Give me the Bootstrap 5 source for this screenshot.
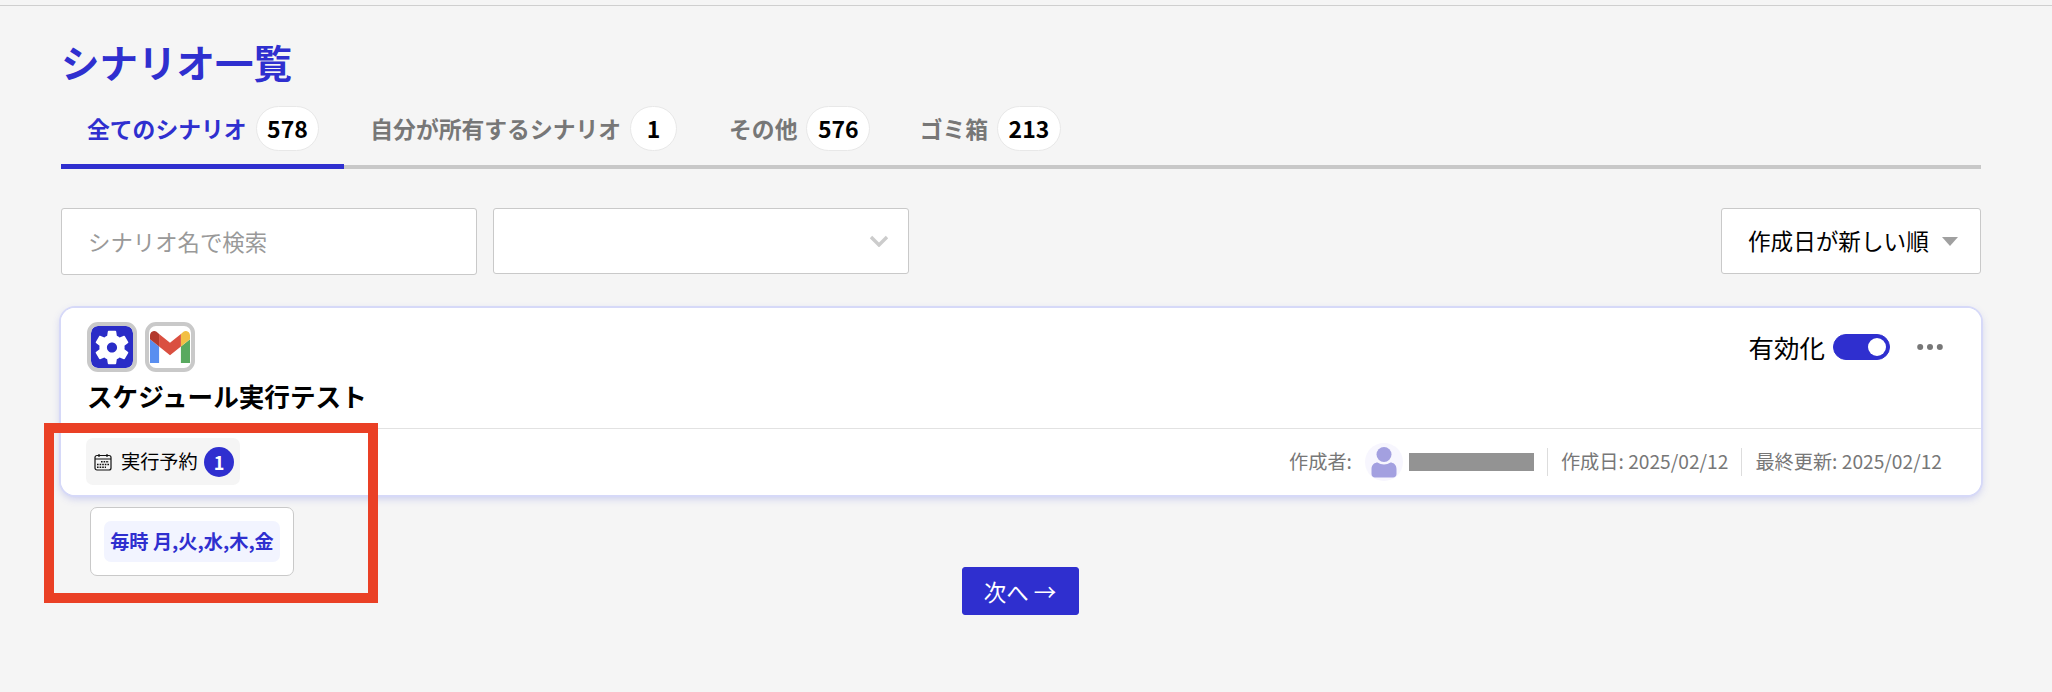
<!DOCTYPE html>
<html lang="ja">
<head>
<meta charset="utf-8">
<title>シナリオ一覧</title>
<link href="https://cdn.jsdelivr.net/npm/bootstrap@5.3.0/dist/css/bootstrap.min.css" rel="stylesheet">
<style>
html,body{height:100%}
body{background:#f5f5f5;font-family:"Noto Sans CJK JP","Noto Sans",sans-serif;color:#000;overflow:hidden;position:relative}
.topline{height:6px;border-bottom:1px solid #cfcfcf}
.pagewrap{padding:31px 71px 0 61px}
.pagetitle{font-size:38.5px;line-height:48px;font-weight:700;color:#2f2fcf;margin:0 0 21px}
.tabrow{border-bottom:4px solid #c8c8c8;gap:0;flex-wrap:nowrap;margin-bottom:39px}
.tabrow .nav-link{display:flex;align-items:center;padding:0 26px 13px;font-size:22.8px;line-height:45px;font-weight:700;color:#777;border-radius:0;background:none;border:0;margin-bottom:-4px;border-bottom:5px solid transparent}
.tabrow .nav-item:first-child .nav-link{padding-right:25px}
.tabrow .nav-item:nth-child(3) .nav-link{padding-right:23.500px}
.tabrow .nav-link.active{color:#2f2fcf;border-bottom-color:#2f2fcf;background:none}
.countpill{display:inline-flex;align-items:center;justify-content:center;height:45px;min-width:47px;padding:0 10.500px;margin-left:9px;background:#fff;border:1px solid #e8e8e8;border-radius:23px;color:#000;font-size:23px;font-weight:700;line-height:1}
.filterbar{margin-bottom:33px;align-items:flex-start}
.searchbox,.selectbox{width:416px;border:1px solid #c9c9c9;border-radius:3px;font-size:22.4px;background-color:#fff;box-shadow:none}
.searchbox{height:67px;padding:0 26px 2px}
.searchbox::placeholder{color:#999}
.selectbox{height:66px;margin-left:16px;background-image:url("data:image/svg+xml,%3csvg xmlns='http://www.w3.org/2000/svg' viewBox='0 0 20 12'%3e%3cpath fill='none' stroke='%23cccccc' stroke-width='3.4' d='M2 2l8 8 8-8'/%3e%3c/svg%3e");background-position:right 19px center;background-size:20px 12px}
.sortbtn{width:260px;height:66px;padding:0 0 0 26px;background:#fff;border:1px solid #c9c9c9;border-radius:3px;font-size:22.6px;color:#000;display:flex;align-items:center}
.sortbtn::after{border-top:9px solid #a0a0a0;border-left:8px solid transparent;border-right:8px solid transparent;border-bottom:0;margin-left:13px}
.scencard{border:0;border-radius:14px;background:#fff;box-shadow:0 0 0 2px #d6d9f8,0 3px 8px rgba(70,80,220,.28);--bs-card-inner-border-radius:14px}
.scenhead{height:120px;padding:14px 38px 0 26px;background:#fff;border:0}
.appicon{width:50px;height:50px;border:4px solid #c9c9c9;border-radius:11px;display:flex;align-items:center;justify-content:center;background:#fff}
.appicon.gear{background:#2a2cc7;background-clip:padding-box}
.scentitle{font-size:25.6px;line-height:36px;font-weight:700;margin:6px 0 0}
.enabletext{font-size:25.5px;line-height:34px}
.enablegroup{margin-top:8px}
.enableswitch{padding:0;margin:0;min-height:0;display:flex}
.enableswitch .form-check-input{width:57px;height:26px;margin:0;background-color:#2f2fcf;border-color:#2f2fcf;box-shadow:none}
.morebtn{padding:0;border:0;background:none;line-height:0;margin-left:27px}
.scenfoot{height:67px;padding:0 39px 0 25px;background:#fff;border-top:1px solid #e2e2e2;border-radius:0 0 14px 14px}
.runchip{height:47px;width:154px;background:#f5f5f5;border-radius:7px;padding:0 6px 0 8px;font-size:19.2px;margin-top:-1px}
.runlabel{margin-left:9px}
.runbadge{width:30px;height:30px;border-radius:50%;padding:0;display:flex;align-items:center;justify-content:center;font-size:18px;font-weight:700;background:#2f2fcf;color:#fff;margin-left:auto}
.schedwrap{left:29px;top:78px;width:204px;height:69px;background:#fff;border:1px solid #c9c9c9;border-radius:7px;z-index:2}
.schedtag{height:41px;width:176px;background:#f2f4ff;color:#2f2fcf;font-weight:700;font-size:19.2px;border-radius:7px;white-space:nowrap}
.metatext{font-size:19.2px;color:#777;line-height:1;white-space:nowrap}
.metasep{width:1px;height:28px;background:#ddd;margin:0 13px}
.avatarbox{width:38px;height:38px;border-radius:50%;background:#f7f6fe;margin-left:13px}
.maskedname{width:125px;height:18px;background:#939393;margin-left:6px}
.nextwrap{padding-right:2px}
.nextbtn{width:117px;height:48px;padding:0;border-radius:3px;background:#2f2fcf;border:1px solid #2f2fcf;color:#fff;font-size:22.5px;line-height:1;margin-top:72px}
.nextbtn:hover{background:#2f2fcf;border-color:#2f2fcf;color:#fff}
.redmark{left:44px;top:423px;width:334px;height:180px;border:10px solid #ea4025;z-index:5;pointer-events:none}
</style>
</head>
<body>
<div class="topline"></div>
<main class="pagewrap">
  <h1 class="pagetitle">シナリオ一覧</h1>
  <ul class="nav tabrow">
    <li class="nav-item"><a class="nav-link active" href="#">全てのシナリオ<span class="countpill">578</span></a></li>
    <li class="nav-item"><a class="nav-link" href="#">自分が所有するシナリオ<span class="countpill">1</span></a></li>
    <li class="nav-item"><a class="nav-link" href="#">その他<span class="countpill">576</span></a></li>
    <li class="nav-item"><a class="nav-link" href="#">ゴミ箱<span class="countpill">213</span></a></li>
  </ul>

  <div class="d-flex filterbar">
    <input class="form-control searchbox" type="text" placeholder="シナリオ名で検索">
    <select class="form-select selectbox" aria-label="フィルター"><option></option></select>
    <div class="dropdown ms-auto">
      <button class="btn dropdown-toggle sortbtn" type="button">作成日が新しい順</button>
    </div>
  </div>

  <div class="card scencard">
    <div class="card-header scenhead d-flex justify-content-between align-items-start">
      <div>
        <div class="d-flex gap-2">
          <div class="appicon gear">
            <svg width="45" height="45" viewBox="0 0 24 24"><path fill="#fff" d="M19.14 12.94c.04-.3.06-.61.06-.94 0-.32-.02-.64-.07-.94l2.03-1.58a.49.49 0 0 0 .12-.61l-1.92-3.32a.488.488 0 0 0-.59-.22l-2.39.96c-.5-.38-1.03-.7-1.62-.94l-.36-2.54a.484.484 0 0 0-.48-.41h-3.84c-.24 0-.43.17-.47.41l-.36 2.54c-.59.24-1.13.57-1.62.94l-2.39-.96c-.22-.08-.47 0-.59.22L2.74 8.87c-.12.21-.08.47.12.61l2.03 1.58c-.05.3-.09.63-.09.94s.02.64.07.94l-2.03 1.58a.49.49 0 0 0-.12.61l1.92 3.32c.12.22.37.29.59.22l2.39-.96c.5.38 1.03.7 1.62.94l.36 2.54c.05.24.24.41.48.41h3.84c.24 0 .44-.17.47-.41l.36-2.54c.59-.24 1.13-.56 1.62-.94l2.39.96c.22.08.47 0 .59-.22l1.92-3.32c.12-.22.07-.47-.12-.61l-2.01-1.58zM12 14.9c-1.6 0-2.9-1.3-2.900-2.900s1.300-2.900 2.900-2.900 2.900 1.300 2.900 2.900-1.300 2.900-2.900 2.900z"/></svg>
          </div>
          <div class="appicon">
            <svg width="40" height="32" viewBox="52 42 88 66" preserveAspectRatio="none">
              <path fill="#598ef0" d="M52 108h20V74L52 59z"/>
              <path fill="#58a95f" d="M120 108h20V59l-20 15z"/>
              <path fill="#f2bf45" d="M120 48v26l20-15v-8c0-7.42-8.47-11.65-14.4-7.2"/>
              <path fill="#da4f40" d="M72 74V48l24 18 24-18v26L96 92"/>
              <path fill="#b33a2e" d="M52 51v8l20 15V48l-5.6-4.2c-5.94-4.45-14.4-.22-14.4 7.2"/>
            </svg>
          </div>
        </div>
        <p class="scentitle">スケジュール実行テスト</p>
      </div>
      <div class="d-flex align-items-center enablegroup">
        <span class="enabletext">有効化</span>
        <div class="form-check form-switch enableswitch ms-2">
          <input class="form-check-input" type="checkbox" role="switch" checked aria-label="有効化">
        </div>
        <button class="morebtn" type="button" aria-label="メニュー">
          <svg width="26" height="8" viewBox="0 0 26 8"><g fill="#777"><circle cx="3.2" cy="4" r="3"/><circle cx="13" cy="4" r="3"/><circle cx="22.8" cy="4" r="3"/></g></svg>
        </button>
      </div>
    </div>
    <div class="card-footer scenfoot d-flex align-items-center justify-content-between position-relative">
      <div class="d-flex align-items-center runchip">
        <svg width="18" height="18" viewBox="0 0 18 18" fill="none" stroke="#111" stroke-width="1.2"><rect x="1" y="2.5" width="16" height="14.5" rx="2"/><path d="M1 6h16M5 1v3M13 1v3"/><path stroke-width="1.6" stroke-dasharray="1.6 1" d="M7 8.800h8M3 11.500h12M3 14.200h9"/></svg>
        <span class="runlabel">実行予約</span>
        <span class="badge runbadge">1</span>
      </div>
      <div class="position-absolute schedwrap d-flex align-items-center justify-content-center">
        <div class="schedtag d-flex align-items-center justify-content-center">毎時 月,火,水,木,金</div>
      </div>
      <div class="d-flex align-items-center">
        <span class="metatext">作成者:</span>
        <div class="avatarbox d-flex align-items-center justify-content-center">
          <svg width="28" height="36" viewBox="0 0 28 36"><g fill="#a3a0e0"><circle cx="14" cy="10.5" r="7.5"/><path d="M1.5 25c0-4.5 3.5-6.500 6-6.500 2 1.300 4 2 6.500 2s4.500-.7 6.500-2c2.500 0 6 2 6 6.500v5c0 2-1.500 3.500-3.500 3.500h-18c-2 0-3.500-1.500-3.500-3.500z"/></g></svg>
        </div>
        <div class="maskedname"></div>
        <div class="metasep"></div>
        <span class="metatext">作成日: 2025/02/12</span>
        <div class="metasep"></div>
        <span class="metatext">最終更新: 2025/02/12</span>
      </div>
    </div>
  </div>

  <div class="text-center nextwrap">
    <button class="btn btn-primary nextbtn" type="button">次へ →</button>
  </div>
</main>
<div class="position-absolute redmark"></div>
<script src="https://cdn.jsdelivr.net/npm/bootstrap@5.3.0/dist/js/bootstrap.bundle.min.js"></script>
</body>
</html>
